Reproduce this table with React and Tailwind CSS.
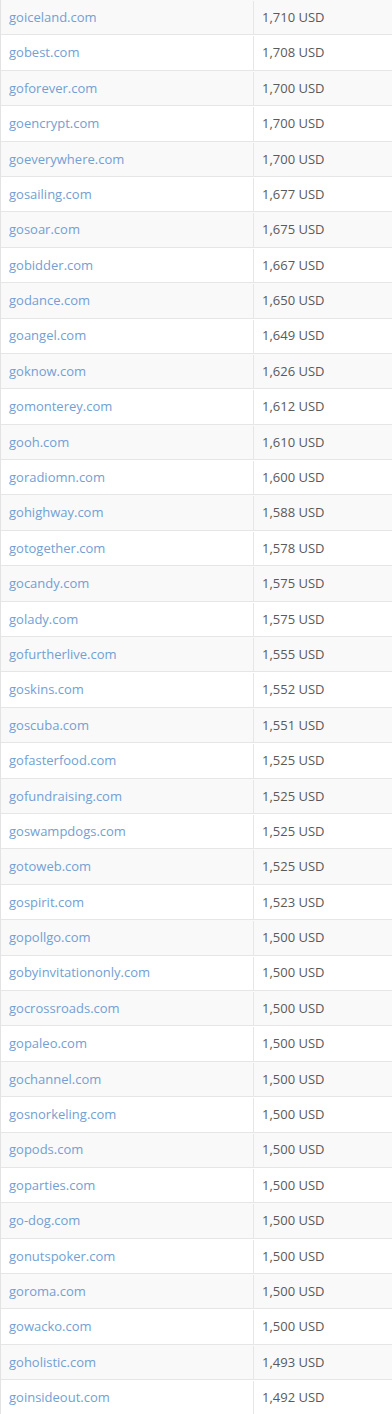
const rows = [
  ['goiceland.com', '1,710'],
  ['gobest.com', '1,708'],
  ['goforever.com', '1,700'],
  ['goencrypt.com', '1,700'],
  ['goeverywhere.com', '1,700'],
  ['gosailing.com', '1,677'],
  ['gosoar.com', '1,675'],
  ['gobidder.com', '1,667'],
  ['godance.com', '1,650'],
  ['goangel.com', '1,649'],
  ['goknow.com', '1,626'],
  ['gomonterey.com', '1,612'],
  ['gooh.com', '1,610'],
  ['goradiomn.com', '1,600'],
  ['gohighway.com', '1,588'],
  ['gotogether.com', '1,578'],
  ['gocandy.com', '1,575'],
  ['golady.com', '1,575'],
  ['gofurtherlive.com', '1,555'],
  ['goskins.com', '1,552'],
  ['goscuba.com', '1,551'],
  ['gofasterfood.com', '1,525'],
  ['gofundraising.com', '1,525'],
  ['goswampdogs.com', '1,525'],
  ['gotoweb.com', '1,525'],
  ['gospirit.com', '1,523'],
  ['gopollgo.com', '1,500'],
  ['gobyinvitationonly.com', '1,500'],
  ['gocrossroads.com', '1,500'],
  ['gopaleo.com', '1,500'],
  ['gochannel.com', '1,500'],
  ['gosnorkeling.com', '1,500'],
  ['gopods.com', '1,500'],
  ['goparties.com', '1,500'],
  ['go-dog.com', '1,500'],
  ['gonutspoker.com', '1,500'],
  ['goroma.com', '1,500'],
  ['gowacko.com', '1,500'],
  ['goholistic.com', '1,493'],
  ['goinsideout.com', '1,492'],
];

export default function App() {
  return (
    <div className="w-[392px] bg-white font-['Open_Sans',sans-serif] text-[13px]">
      <div className="border-l border-[#e3e3e3]">
        {rows.map(([domain, price], i) => (
          <div
            key={domain}
            className={
              'flex h-[35.4px] items-center border-b border-[#e6e6e6] pt-px ' +
              (i % 2 === 0 ? 'bg-[#f9f9f9]' : 'bg-white')
            }
          >
            <div className="flex h-full w-[253px] items-center border-r border-[#e6e6e6] px-2">
              <a href="#" className="text-[#72a0d4]">{domain}</a>
            </div>
            <div className="flex-1 px-2 text-[#5a5a5a]">{price} USD</div>
          </div>
        ))}
      </div>
    </div>
  );
}
